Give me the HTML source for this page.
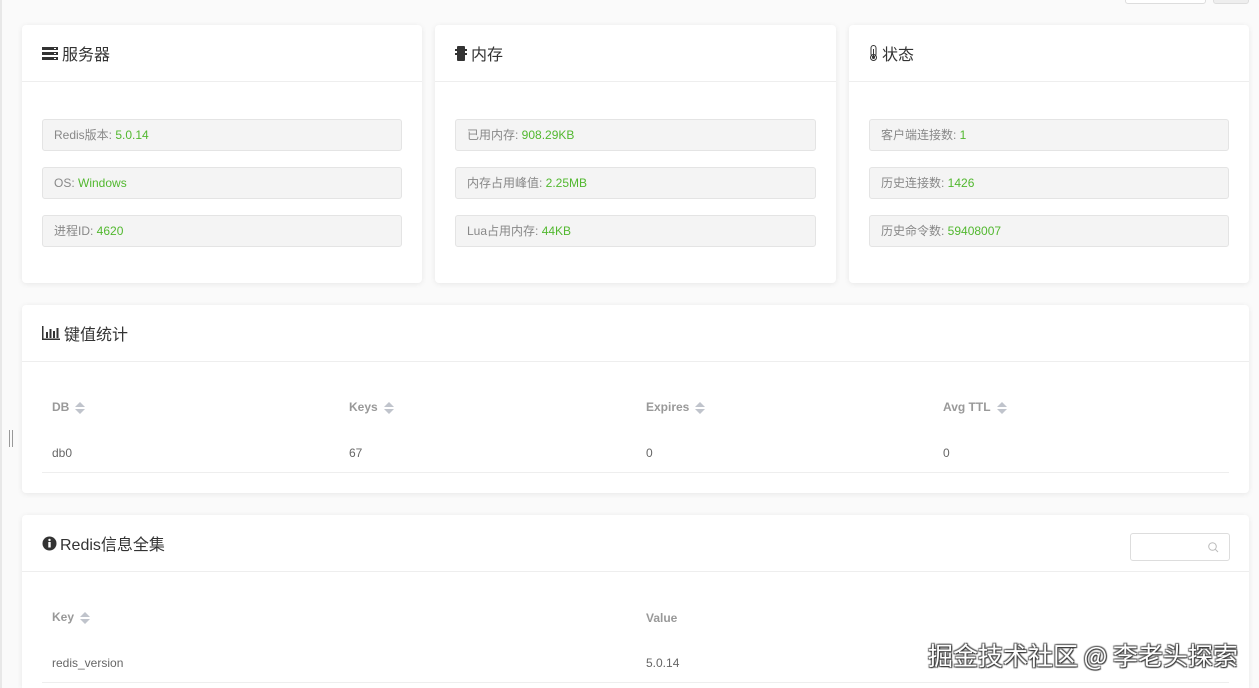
<!DOCTYPE html>
<html style="overflow:hidden;height:688px"><head><meta charset="utf-8"><style>
*{box-sizing:border-box;margin:0;padding:0}
body{width:1259px;height:688px;overflow:hidden;background:#fafafa;font-family:"Liberation Sans","Noto Sans CJK SC",sans-serif;position:relative;color:#333}
.card{position:absolute;background:#fff;border-radius:4px;box-shadow:0 1px 6px rgba(0,0,0,.08);overflow:hidden}
.hd{height:57px;border-bottom:1px solid #eee;display:flex;align-items:center;padding-left:20px;font-size:16px;color:#333}
.hd svg{margin-right:4px}
.item{position:absolute;left:20px;right:20px;height:32px;background:#f4f4f4;border:1px solid #e4e4e4;border-radius:3px;font-size:12px;color:#888;padding-left:11px;line-height:30px}
.item b{font-weight:normal;color:#52b82f}
.th{position:absolute;font-size:12px;font-weight:bold;color:#999}
.td{position:absolute;font-size:12px;color:#666}
.sort{display:inline-block;vertical-align:middle;margin-left:6px;width:10px;height:12px;position:relative}
.sort:before{content:"";position:absolute;left:0;top:0;border:5px solid transparent;border-top:0;border-bottom:5px solid #c0c4cc}
.sort:after{content:"";position:absolute;left:0;top:7px;border:5px solid transparent;border-bottom:0;border-top:5px solid #c0c4cc}
.line{position:absolute;height:1px;background:#eee}
</style></head><body>
<div style="position:absolute;left:0;top:0;width:2px;height:688px;background:#e8e8e8"></div>
<div style="position:absolute;left:9px;top:430px;width:4px;height:17px;border-left:1px solid #999;border-right:1px solid #999"></div>
<div style="position:absolute;left:1125px;top:-4px;width:81px;height:8px;border:1px solid #ddd;border-radius:3px;background:#fff"></div>
<div style="position:absolute;left:1213px;top:-4px;width:36px;height:8px;border:1px solid #ddd;border-radius:3px;background:#eee"></div>

<div class="card" style="left:22px;top:25px;width:400px;height:258px">
<div class="hd"><svg width="16" height="13" viewBox="0 0 16 13"><rect x="0" y="0" width="16" height="3" fill="#333"/><rect x="0" y="5" width="16" height="3" fill="#333"/><rect x="0" y="10" width="16" height="3" fill="#333"/><rect x="12" y="1" width="2" height="1" fill="#fff"/><rect x="12" y="6" width="2" height="1" fill="#fff"/><rect x="12" y="11" width="2" height="1" fill="#fff"/></svg>服务器</div>
<div class="item" style="top:94px">Redis版本: <b>5.0.14</b></div>
<div class="item" style="top:142px">OS: <b>Windows</b></div>
<div class="item" style="top:190px">进程ID: <b>4620</b></div>
</div>
<div class="card" style="left:435px;top:25px;width:401px;height:258px">
<div class="hd"><svg width="12" height="15" viewBox="0 0 12 15"><rect x="2" y="0" width="8" height="15" rx="1" fill="#333"/><rect x="0" y="3" width="2" height="2" fill="#333"/><rect x="0" y="7" width="2" height="2" fill="#333"/><rect x="10" y="3" width="2" height="2" fill="#333"/><rect x="10" y="7" width="2" height="2" fill="#333"/></svg>内存</div>
<div class="item" style="top:94px">已用内存: <b>908.29KB</b></div>
<div class="item" style="top:142px">内存占用峰值: <b>2.25MB</b></div>
<div class="item" style="top:190px">Lua占用内存: <b>44KB</b></div>
</div>
<div class="card" style="left:849px;top:25px;width:400px;height:258px">
<div class="hd"><svg width="9" height="16" viewBox="0 0 9 16"><rect x="2" y="0.5" width="5" height="11" rx="2.5" fill="none" stroke="#333"/><circle cx="4.5" cy="12.5" r="3" fill="none" stroke="#333"/><circle cx="4.5" cy="12.5" r="1.5" fill="#333"/><rect x="4" y="4" width="1" height="8" fill="#333"/></svg>状态</div>
<div class="item" style="top:94px">客户端连接数: <b>1</b></div>
<div class="item" style="top:142px">历史连接数: <b>1426</b></div>
<div class="item" style="top:190px">历史命令数: <b>59408007</b></div>
</div>

<div class="card" style="left:22px;top:305px;width:1227px;height:188px">
<div class="hd"><svg width="18" height="14" viewBox="0 0 18 14"><rect x="0" y="0" width="1.5" height="14" fill="#333"/><rect x="0" y="12.5" width="18" height="1.5" fill="#333"/><rect x="4" y="6" width="2" height="6" fill="#333"/><rect x="7.5" y="3" width="2" height="9" fill="#333"/><rect x="11" y="5" width="2" height="7" fill="#333"/><rect x="14.5" y="2" width="2" height="10" fill="#333"/></svg>键值统计</div>
<div class="th" style="left:30px;top:95px">DB<span class="sort"></span></div>
<div class="th" style="left:327px;top:95px">Keys<span class="sort"></span></div>
<div class="th" style="left:624px;top:95px">Expires<span class="sort"></span></div>
<div class="th" style="left:921px;top:95px">Avg TTL<span class="sort"></span></div>
<div class="td" style="left:30px;top:141px">db0</div>
<div class="td" style="left:327px;top:141px">67</div>
<div class="td" style="left:624px;top:141px">0</div>
<div class="td" style="left:921px;top:141px">0</div>
<div class="line" style="left:20px;right:20px;top:167px"></div>
</div>

<div class="card" style="left:22px;top:515px;width:1227px;height:173px;border-radius:4px 4px 0 0">
<div class="hd"><svg width="15" height="15" viewBox="0 0 15 15" style="margin-right:3px"><circle cx="7.5" cy="7.5" r="7" fill="#333"/><circle cx="7.5" cy="4" r="1.2" fill="#fff"/><rect x="6.3" y="6" width="2.4" height="5.5" fill="#fff"/></svg>Redis信息全集</div>
<div style="position:absolute;left:1108px;top:18px;width:100px;height:28px;border:1px solid #ddd;border-radius:3px"><svg style="position:absolute;right:10px;top:8px" width="11" height="11" viewBox="0 0 11 11"><circle cx="4.5" cy="4.5" r="3.8" fill="none" stroke="#bbb"/><line x1="7.3" y1="7.3" x2="10" y2="10" stroke="#bbb"/></svg></div>
<div class="th" style="left:30px;top:95px">Key<span class="sort"></span></div>
<div class="th" style="left:624px;top:96px">Value</div>
<div class="td" style="left:30px;top:141px">redis_version</div>
<div class="td" style="left:624px;top:141px">5.0.14</div>
<div class="line" style="left:20px;right:20px;top:167px"></div>
</div>
<div style="position:absolute;left:928px;top:637px;font-size:25px;color:#fff;font-family:'Noto Sans CJK SC',sans-serif;white-space:nowrap;text-shadow:1px 1px 1px #333,-1px -1px 1px #666,1px -1px 1px #555,-1px 1px 1px #555">掘金技术社区 @ 李老头探索</div>
</body></html>
